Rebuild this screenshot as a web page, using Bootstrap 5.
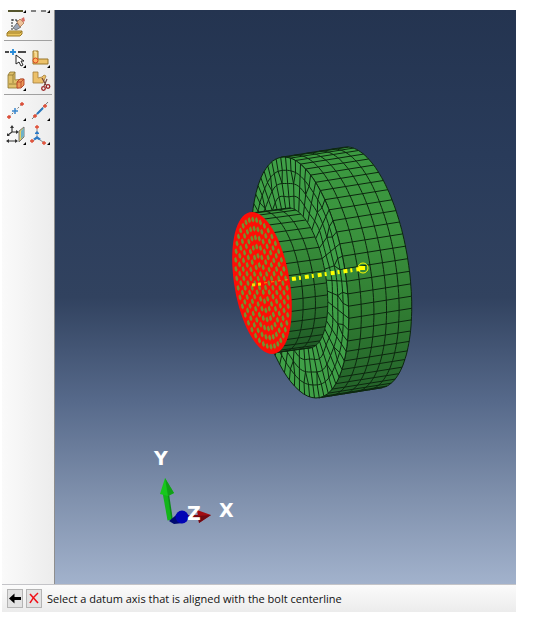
<!DOCTYPE html>
<html lang="en">
<head>
<meta charset="utf-8">
<meta name="viewport" content="width=device-width, initial-scale=1">
<title>Bolt load viewport</title>
<link href="https://cdn.jsdelivr.net/npm/bootstrap@5.3.0/dist/css/bootstrap.min.css" rel="stylesheet">
<style>
body { background: #fff; font-family: "Open Sans", "Noto Sans", sans-serif; }
.app-shell { min-height: 100vh; padding: 10px 22px 12px 2px; }
.tool-strip { width: 53px; padding: 0 2px; background: linear-gradient(90deg, #fafafa, #ececec); border-right: 1px solid #8e8e8e; }
.tool-grid { display: grid; grid-template-columns: 24px 24px; grid-auto-rows: 24px; }
.tool-edge { height: 6px; }
.tool-rule { height: 1px; margin: 0 0 5px; border: 0; opacity: 1; background: #a0a0a0; }
.tool-btn { width: 24px; height: 24px; padding: 0; border: 0; background: none; }
.tool-btn svg, .tool-edge svg { display: block; }
.canvas-area { background: linear-gradient(180deg, #243450 0%, #293b5a 25%, #31425f 50%, #56698a 68%, #8091ad 85%, #a2b2cc 100%); }
.canvas-area svg { display: block; width: 100%; height: 100%; }
.axis-name { font: bold 19px "DejaVu Sans", sans-serif; fill: #fff; }
.prompt-bar { height: 28px; padding: 0 5px; gap: 3px; border-top: 1px solid #c4c4c8; background: linear-gradient(180deg, #fbfbfb, #ececec); }
.prompt-btn { width: 16px; height: 19px; padding: 0; border: 1px solid #b4b4b4; background: #e3e3e3; }
.prompt-btn svg { display: block; }
.prompt-text { font-size: 11px; line-height: 16px; color: #111; margin-left: 2px; }
</style>
<script src="https://cdn.jsdelivr.net/npm/bootstrap@5.3.0/dist/js/bootstrap.bundle.min.js"></script>
</head>
<body>
<div class="app-shell d-flex flex-column">
  <main class="d-flex flex-grow-1">
    <div class="tool-strip flex-shrink-0" role="toolbar" aria-label="Modeling tools">
      <div class="tool-edge"><svg width="48" height="6" viewBox="0 0 48 6"><path d="M4 1H19" stroke="#55552c" stroke-width="2"/><path d="M27 1h5M37 1h5" stroke="#111" stroke-width="1"/><path d="M22 0v3h-3zM46 0v3h-3z"/></svg></div>
      <div class="tool-grid">
        <button type="button" class="tool-btn" aria-label="Erase"><svg width="24" height="24" viewBox="0 0 24 24">
          <path d="M8 3V14M8 4H13M13 4v6" stroke="#222" stroke-dasharray="2 1" fill="none"/>
          <path d="M3 17l2-2h13v3l-2 2H3z" fill="#e9c45c" stroke="#9b7b27"/><path d="M3 17H16l2-2" stroke="#9b7b27" fill="none"/>
          <path d="M13 7l4 4-5 3-3-2z" fill="#9aa4b5" stroke="#555" stroke-width=".7"/><path d="M13 6l3-3 4 4-4 4z" fill="#edc39a" stroke="#a5693f" stroke-width=".7"/><path d="M17 3l3-2 1 4-2 1z" fill="#d96d60"/>
        </svg></button>
      </div>
      <hr class="tool-rule">
      <div class="tool-grid">
        <button type="button" class="tool-btn" aria-label="Select point"><svg width="24" height="24" viewBox="0 0 24 24">
          <path d="M1 6h4M14 6h8" stroke="#111" stroke-width="1.3"/><path d="M6 6h6M9 3v6" stroke="#268ad8" stroke-width="1.8"/>
          <path d="M12 9v9l3-2 2 4 2-1-2-4h3z" fill="#fff" stroke="#222"/><path d="M22 19v3h-3z"/>
        </svg></button>
        <button type="button" class="tool-btn" aria-label="Partition edge"><svg width="24" height="24" viewBox="0 0 24 24">
          <path d="M5 5h5v8h10v5H5z" fill="#edc36b" stroke="#98772d"/><path d="M6 6h2v8" stroke="#faf0bb" fill="none"/><circle cx="7.500" cy="14.500" r="2.500" fill="#ffb660" stroke="#d74422"/><path d="M22 19v3h-3z"/>
        </svg></button>
        <button type="button" class="tool-btn" aria-label="Partition cell"><svg width="24" height="24" viewBox="0 0 24 24">
          <path d="M4 5l2-3h5v8l8-1v7l-5 2H4z" fill="#dfc069" stroke="#8a7430" stroke-width=".8"/><path d="M4 5h5v8M9 5l2-3M5 14h8" stroke="#8a7430" stroke-width=".8" fill="none"/><path d="M13 12l3-3h4v6l-3 3h-4z" fill="#ea9a58" stroke="#b33a25" stroke-width=".9"/><path d="M13 12h4v5M17 12l3-3" stroke="#b33a25" stroke-width=".8" fill="none"/><path d="M22 18v3h-3z"/>
        </svg></button>
        <button type="button" class="tool-btn" aria-label="Cut geometry"><svg width="24" height="24" viewBox="0 0 24 24">
          <path d="M5 2h5v6l4-1 2-2 2 1-3 7H5z" fill="#ecc06a" stroke="#a57f3a" stroke-width=".8"/><path d="M14 8l4 7M19 9l-3 7" stroke="#74453c" stroke-width="1.200"/><circle cx="15.500" cy="18.500" r="1.800" fill="none" stroke="#9a2525" stroke-width="1.300"/><circle cx="20" cy="16.500" r="1.800" fill="none" stroke="#9a2525" stroke-width="1.300"/>
        </svg></button>
      </div>
      <hr class="tool-rule">
      <div class="tool-grid">
        <button type="button" class="tool-btn" aria-label="Datum point"><svg width="24" height="24" viewBox="0 0 24 24">
          <path d="M5 17L18 4" stroke="#777" stroke-dasharray="2 2"/><path d="M3 17h4M5 15v4M16 4h4M18 2v4" stroke="#d9432c" stroke-width="1.300"/><path d="M8 11h6M11 8v6" stroke="#3a87cd" stroke-width="1.500"/><path d="M22 18v3h-3z"/>
        </svg></button>
        <button type="button" class="tool-btn" aria-label="Datum axis"><svg width="24" height="24" viewBox="0 0 24 24">
          <path d="M4 19L20 2" stroke="#777"/><path d="M9 14L15 8" stroke="#2877bd" stroke-width="2"/><path d="M5 16h4M7 14v4M15 6h4M17 4v4" stroke="#df4930" stroke-width="1.300"/><path d="M22 18v3h-3z"/>
        </svg></button>
        <button type="button" class="tool-btn" aria-label="Datum plane"><svg width="24" height="24" viewBox="0 0 24 24">
          <path d="M8 3v5l-4 3M8 8h5M3 17h10" stroke="#333" stroke-width="1.200" fill="none"/><path d="M6 4l2-3 2 3zM12 6l3 2-3 2zM3 9v3h3zM5 15v4l-3-2zM11 15v4l3-2z" fill="#333"/>
          <path d="M15 7l5-4v10l-5 5z" fill="#e3cf68" stroke="#777"/><path d="M17 7l3-3v8l-3 3z" fill="#6fb1c7"/><path d="M22 18v3h-3z"/>
        </svg></button>
        <button type="button" class="tool-btn" aria-label="Datum coordinate system"><svg width="24" height="24" viewBox="0 0 24 24">
          <path d="M9 5v9l-4 3M9 14l6 4" stroke="#888" fill="none"/><path d="M7 9l2-2 2 2v1H7zM5 15l4-3 4 3-2 1-2-1-2 1z" fill="#2c7ac7"/><path d="M7 3h4M9 1v4M2 17h4M4 15v4M14 19h4M16 17v4" stroke="#df4930" stroke-width="1.300"/><path d="M22 18v3h-3z"/>
        </svg></button>
      </div>
    </div>

    <section class="canvas-area flex-grow-1" aria-label="Model viewport">
      <svg viewBox="55 10 461 574" role="img" aria-label="Meshed bolt with selected section and datum axis">
        <defs>
          <linearGradient id="sideShade" x1="0" y1="150" x2="0" y2="395" gradientUnits="userSpaceOnUse"><stop offset="0" stop-color="#3c9b41"/><stop offset=".35" stop-color="#3a923d"/><stop offset=".65" stop-color="#307c32"/><stop offset="1" stop-color="#236229"/></linearGradient>
          <linearGradient id="shaftShade" x1="0" y1="208" x2="0" y2="350" gradientUnits="userSpaceOnUse"><stop offset="0" stop-color="#3b9a40"/><stop offset=".5" stop-color="#328034"/><stop offset="1" stop-color="#1f5a26"/></linearGradient>
        </defs>
        <g fill="none" stroke="#0c270f" stroke-width="1" stroke-linejoin="round">
          <path id="flangeSide" fill="url(#sideShade)"/>
          <path id="flangeSideMesh"/>
          <path id="flangeFace" fill="#3fa047"/>
          <path id="flangeFaceMesh"/>
          <path id="shaftSide" fill="url(#shaftShade)"/>
          <path id="shaftMesh"/>
        </g>
        <path id="section" fill="#fd0f05" stroke="#ff0d08" stroke-width="2"/>
        <path id="sectionCells" fill="#75902f"/>
        <path d="M292 279L360 269" stroke="#ff0" stroke-width="4" stroke-dasharray="4 3 2 4"/>
        <path d="M252 285l9 -1" stroke="#ffd800" stroke-width="3" stroke-dasharray="3 3"/>
        <path d="M264 283L292 279" stroke="#ff8a00" stroke-width="1" stroke-dasharray="3 4"/>
        <path d="M359 268h6" stroke="#ff0" stroke-width="4"/>
        <circle cx="363" cy="268" r="5" fill="none" stroke="#ff0" stroke-width="1"/>
        <path d="M170 520L165 492" stroke="#13b51a" stroke-width="5"/><path d="M172 519L168 492" stroke="#0c8a18" stroke-width="1.500"/>
        <path d="M165 478L174 493L168 496L160 494z" fill="#17c71c"/><path d="M165 478L174 493L168 496z" fill="#119f17"/>
        <path d="M184 517H200" stroke="#7d0c14" stroke-width="4"/><path d="M197 510L211 515L199 523z" fill="#a20c12"/><path d="M198 516L211 515L199 523z" fill="#700a13"/>
        <path d="M169 521L181 511L183 523L174 524z" fill="#000a72"/><circle cx="182" cy="517" r="6.500" fill="#0003b5"/>
        <text class="axis-name" x="154" y="465">Y</text><text class="axis-name" x="187" y="520">Z</text><text class="axis-name" x="219" y="517">X</text>
      </svg>
    </section>
  </main>
  <footer class="prompt-bar d-flex align-items-center">
    <button type="button" class="prompt-btn" aria-label="Back"><svg width="14" height="17" viewBox="0 0 14 17"><path d="M1 8.500L6.500 3.500V7H13v3H6.500v3.500z"/></svg></button>
    <button type="button" class="prompt-btn" aria-label="Cancel"><svg width="14" height="17" viewBox="0 0 14 17"><path d="M3 4L11 13M11 3Q6 7 3 13" stroke="#f01018" stroke-width="1.600" fill="none"/></svg></button>
    <span class="prompt-text">Select a datum axis that is aligned with the bolt centerline</span>
  </footer>
</div>
<script>
const TAU = Math.PI * 2;
const flange = { x: 300, y: 277.5, a: 46, b: 16, c: 120.5 };
const shaft = { x: 262, y: 283, a: 27, b: 10, c: 70 };
const root = { x: 299, y: 278, a: 27, b: 10, c: 70 };
const flangeDepth = [63, -10], shaftDepth = [37, -5];

const at = (e, t, k = 1, d = [0, 0], s = 0) =>
  [e.x + k * (e.a * Math.cos(t) + e.b * Math.sin(t)) + d[0] * s, e.y + k * e.c * Math.sin(t) + d[1] * s];
const line = (pts) => "M" + pts.map((p) => p.map((v) => v.toFixed(1)).join(" ")).join("L");
const arc = (e, from, to, k, d, s) =>
  Array.from({ length: 73 }, (_, i) => at(e, from + (to - from) * i / 72, k, d, s));
const put = (id, d) => document.getElementById(id).setAttribute("d", d);

// Outline and mesh of an ellipse swept along d; top is the angle of its silhouette edge.
function extrusion(e, d, steps, segments, offset) {
  const f = (t) => (e.a * Math.cos(t) + e.b * Math.sin(t)) * d[1] - e.c * Math.sin(t) * d[0];
  let top = -Math.PI / 2, best = -Infinity;
  for (let t = -Math.PI; t < 0; t += 0.005) if (f(t) > best) { best = f(t); top = t; }
  const bottom = top + Math.PI;
  let mesh = "";
  for (let s = 1; s < steps; s++) mesh += line(arc(e, top, bottom, 1, d, s / steps));
  for (let i = 0; i < segments; i++) {
    const t = -Math.PI + (i + offset) * TAU / segments;
    if (t > top && t < bottom) mesh += line([at(e, t), at(e, t, 1, d, 1)]);
  }
  const body = line([...arc(e, top, bottom, 1, d, 1), ...arc(e, bottom, top, 1, d, 0)]) + "Z";
  return { body, mesh };
}
const outer = extrusion(flange, flangeDepth, 5, 60, 0.3);
put("flangeSide", outer.body);
put("flangeSideMesh", outer.mesh);
put("flangeFace", line(arc(flange, 0, TAU)) + "Z");

const mix = (t, k) => {
  const p = at(root, t), q = at(flange, t);
  return [p[0] + (q[0] - p[0]) * k, p[1] + (q[1] - p[1]) * k];
};
const ringAt = (t, k) => mix(t, k + 0.04 * Math.cos(t * 10) * (1 - k));
let face = "";
for (const k of [0.25, 0.5, 0.75]) face += line(Array.from({ length: 121 }, (_, i) => ringAt(i * TAU / 120, k)));
for (let i = 0; i < 60; i++) {
  const t = -Math.PI + (i + 0.3) * TAU / 60;
  // Every third pair of spokes merges at the middle ring, leaving 40 at the root.
  const g = i % 3, step = TAU / 60;
  const inner = t + (g === 0 ? 0 : g === 1 ? step / 2 : -step / 2);
  face += line([mix(t, 1), ringAt(t, 0.75), ringAt(inner, 0.5)]);
  if (g < 2) face += line([ringAt(inner, 0.5), mix(inner, 0)]);
}
put("flangeFaceMesh", face);

const stem = extrusion(shaft, shaftDepth, 3, 36, 0.4);
put("shaftSide", stem.body);
put("shaftMesh", stem.mesh);
put("section", line(arc(shaft, 0, TAU)) + "Z");

let cells = "";
for (let ring = 1; ring <= 7; ring++) {
  const n = ring * 6;
  for (let i = 0; i < n; i++) {
    const [x, y] = at(shaft, (i + ring % 2 / 2) * TAU / n, ring / 7.7);
    cells += line([[x - 1.6, y - 1.4], [x + 0.1, y - 3], [x + 1.6, y + 1], [x + 0.4, y + 3.2], [x - 1.2, y + 1.6]]) + "Z";
  }
}
put("sectionCells", cells);
</script>
</body>
</html>
